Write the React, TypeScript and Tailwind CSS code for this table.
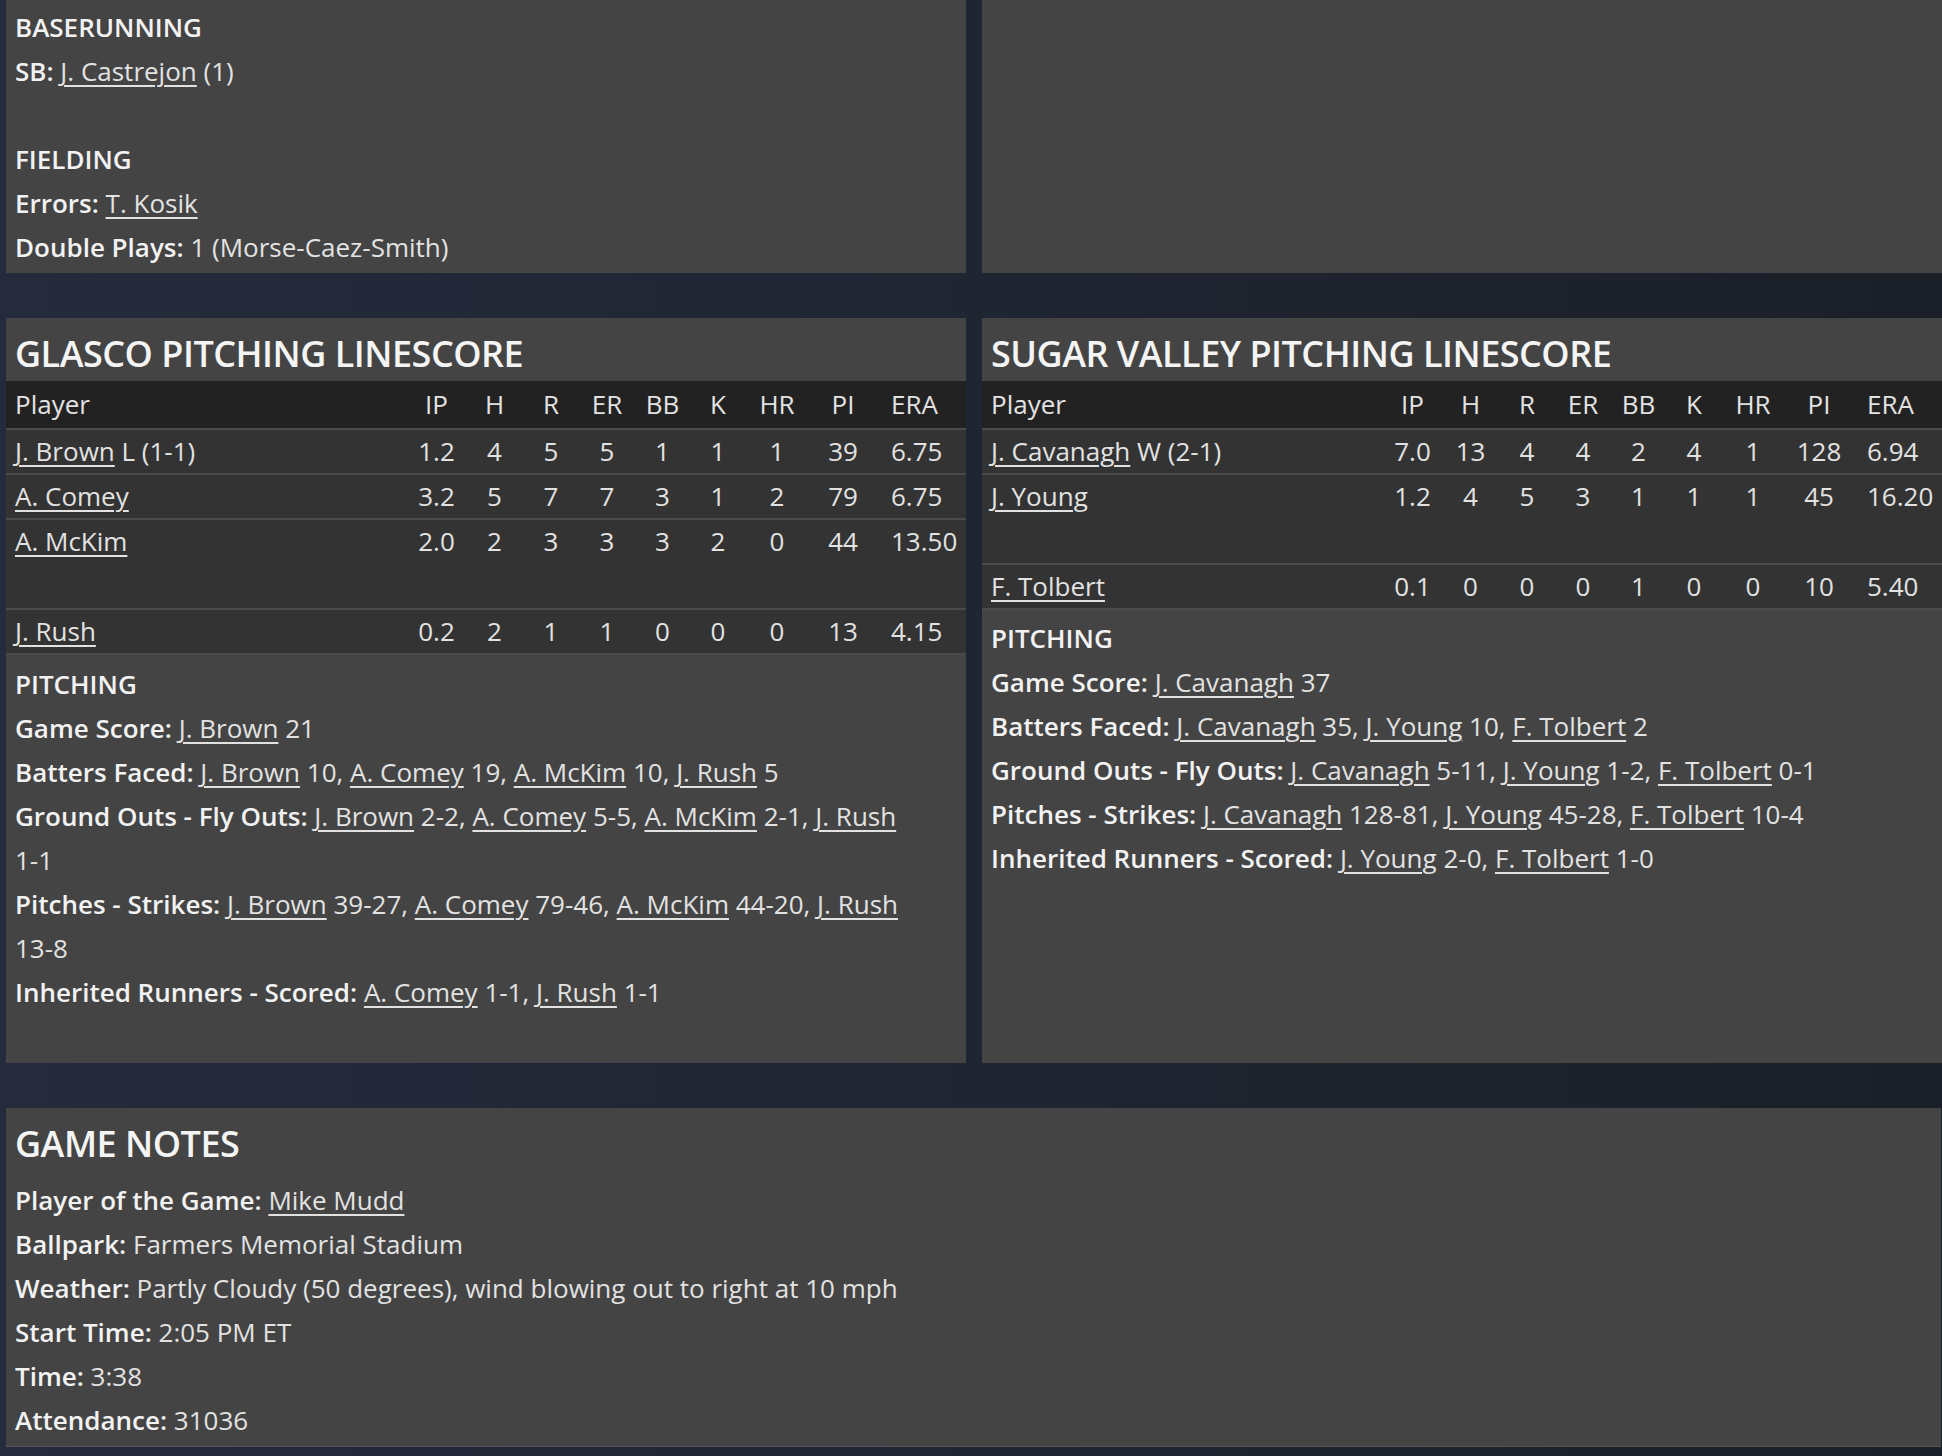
import React from "react";

const L = ({ children }: { children: React.ReactNode }) => (
  <span className="underline decoration-2 underline-offset-[4px]">{children}</span>
);

const B = ({ children }: { children: React.ReactNode }) => (
  <span className="font-semibold text-[#f2f2f2]">{children}</span>
);

const Line = ({ children }: { children?: React.ReactNode }) => (
  <div className="h-[44px] leading-[44px] whitespace-nowrap">{children}</div>
);

type Row = { name: string; extra?: string; stats: string[]; tall?: boolean };

const COLS = ["IP", "H", "R", "ER", "BB", "K", "HR", "PI", "ERA"];

const gridCls =
  "grid grid-cols-[401px_59px_57px_56px_56px_55px_56px_62px_70px_74px] pr-[14px]";

function Table({ rows }: { rows: Row[] }) {
  return (
    <div>
      <div className={`${gridCls} h-[49px] items-center bg-[#222222] border-b-2 border-[#4b4b4b]`}>
        <div className="pl-[9px]">Player</div>
        {COLS.map((c) => (
          <div key={c} className={c === "ERA" ? "pl-[13px] text-left" : "text-center"}>
            {c}
          </div>
        ))}
      </div>
      {rows.map((r) => (
        <div
          key={r.name}
          className={`bg-[#333333] border-b-2 border-[#4b4b4b] ${r.tall ? "h-[90px]" : "h-[45px]"}`}
        >
          <div className={`${gridCls} h-[43px] items-center`}>
            <div className="pl-[9px] whitespace-nowrap">
              <L>{r.name}</L>
              {r.extra ? <span> {r.extra}</span> : null}
            </div>
            {r.stats.map((s, i) => (
              <div key={i} className={i === 8 ? "pl-[13px] text-left" : "text-center"}>
                {s}
              </div>
            ))}
          </div>
        </div>
      ))}
    </div>
  );
}

function Title({ children }: { children: React.ReactNode }) {
  return (
    <div className="h-[63px] pl-[9px] pt-[14px] text-[36px] leading-[44px] font-semibold tracking-[-0.5px] text-[#f4f4f4]">
      {children}
    </div>
  );
}

const glascoRows: Row[] = [
  { name: "J. Brown", extra: "L (1-1)", stats: ["1.2", "4", "5", "5", "1", "1", "1", "39", "6.75"] },
  { name: "A. Comey", stats: ["3.2", "5", "7", "7", "3", "1", "2", "79", "6.75"] },
  { name: "A. McKim", stats: ["2.0", "2", "3", "3", "3", "2", "0", "44", "13.50"], tall: true },
  { name: "J. Rush", stats: ["0.2", "2", "1", "1", "0", "0", "0", "13", "4.15"] },
];

const svRows: Row[] = [
  { name: "J. Cavanagh", extra: "W (2-1)", stats: ["7.0", "13", "4", "4", "2", "4", "1", "128", "6.94"] },
  { name: "J. Young", stats: ["1.2", "4", "5", "3", "1", "1", "1", "45", "16.20"], tall: true },
  { name: "F. Tolbert", stats: ["0.1", "0", "0", "0", "1", "0", "0", "10", "5.40"] },
];

export default function App() {
  return (
    <div className="min-h-screen w-[1942px] bg-linear-to-r from-[#242b3c] to-[#1b1f28] font-['Open_Sans','Noto_Sans',sans-serif] text-[26px] text-[#e2e2e2]">
      <div className="flex flex-col gap-[45px] pl-[6px] pb-[9px]">
        {/* Top row */}
        <div className="grid grid-cols-[960px_960px] gap-[16px]">
          <div className="h-[273px] bg-[#444444] pl-[9px] pt-[5px]">
            <Line>
              <B>BASERUNNING</B>
            </Line>
            <Line>
              <B>SB:</B> <L>J. Castrejon</L> (1)
            </Line>
            <Line />
            <Line>
              <B>FIELDING</B>
            </Line>
            <Line>
              <B>Errors:</B> <L>T. Kosik</L>
            </Line>
            <Line>
              <B>Double Plays:</B> 1 (Morse-Caez-Smith)
            </Line>
          </div>
          <div className="h-[273px] bg-[#444444]" />
        </div>

        {/* Pitching linescores */}
        <div className="grid grid-cols-[960px_960px] gap-[16px]">
          <div className="h-[745px] bg-[#444444]">
            <Title>GLASCO PITCHING LINESCORE</Title>
            <Table rows={glascoRows} />
            <div className="pl-[9px] pt-[7px]">
              <Line>
                <B>PITCHING</B>
              </Line>
              <Line>
                <B>Game Score:</B> <L>J. Brown</L> 21
              </Line>
              <Line>
                <B>Batters Faced:</B> <L>J. Brown</L> 10, <L>A. Comey</L> 19, <L>A. McKim</L> 10,{" "}
                <L>J. Rush</L> 5
              </Line>
              <Line>
                <B>Ground Outs - Fly Outs:</B> <L>J. Brown</L> 2-2, <L>A. Comey</L> 5-5,{" "}
                <L>A. McKim</L> 2-1, <L>J. Rush</L>
              </Line>
              <Line>1-1</Line>
              <Line>
                <B>Pitches - Strikes:</B> <L>J. Brown</L> 39-27, <L>A. Comey</L> 79-46,{" "}
                <L>A. McKim</L> 44-20, <L>J. Rush</L>
              </Line>
              <Line>13-8</Line>
              <Line>
                <B>Inherited Runners - Scored:</B> <L>A. Comey</L> 1-1, <L>J. Rush</L> 1-1
              </Line>
            </div>
          </div>
          <div className="h-[745px] bg-[#444444]">
            <Title>SUGAR VALLEY PITCHING LINESCORE</Title>
            <Table rows={svRows} />
            <div className="pl-[9px] pt-[6px]">
              <Line>
                <B>PITCHING</B>
              </Line>
              <Line>
                <B>Game Score:</B> <L>J. Cavanagh</L> 37
              </Line>
              <Line>
                <B>Batters Faced:</B> <L>J. Cavanagh</L> 35, <L>J. Young</L> 10, <L>F. Tolbert</L> 2
              </Line>
              <Line>
                <B>Ground Outs - Fly Outs:</B> <L>J. Cavanagh</L> 5-11, <L>J. Young</L> 1-2,{" "}
                <L>F. Tolbert</L> 0-1
              </Line>
              <Line>
                <B>Pitches - Strikes:</B> <L>J. Cavanagh</L> 128-81, <L>J. Young</L> 45-28,{" "}
                <L>F. Tolbert</L> 10-4
              </Line>
              <Line>
                <B>Inherited Runners - Scored:</B> <L>J. Young</L> 2-0, <L>F. Tolbert</L> 1-0
              </Line>
            </div>
          </div>
        </div>

        {/* Game notes */}
        <div className="h-[339px] w-[1935px] bg-[#444444] border-b border-[#555555]">
          <div className="h-[63px] pl-[9px] pt-[14px] text-[36px] leading-[44px] font-semibold tracking-[-0.5px] text-[#f4f4f4]">
            GAME NOTES
          </div>
          <div className="pl-[9px] pt-[7px]">
            <Line>
              <B>Player of the Game:</B> <L>Mike Mudd</L>
            </Line>
            <Line>
              <B>Ballpark:</B> Farmers Memorial Stadium
            </Line>
            <Line>
              <B>Weather:</B> Partly Cloudy (50 degrees), wind blowing out to right at 10 mph
            </Line>
            <Line>
              <B>Start Time:</B> 2:05 PM ET
            </Line>
            <Line>
              <B>Time:</B> 3:38
            </Line>
            <Line>
              <B>Attendance:</B> 31036
            </Line>
          </div>
        </div>
      </div>
    </div>
  );
}
